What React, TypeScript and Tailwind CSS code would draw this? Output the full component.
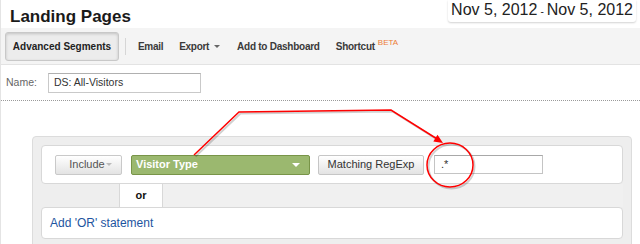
import React from "react";

function Caret({ className }: { className: string }) {
  return (
    <svg width="8" height="4" viewBox="0 0 8 4" className={className}>
      <path d="M0 0 L8 0 L4 4 Z" fill="currentColor" />
    </svg>
  );
}

function Annotation() {
  return (
    <svg
      width="640"
      height="244"
      viewBox="0 0 640 244"
      className="absolute left-0 top-0 pointer-events-none"
    >
      {/* soft shadow */}
      <g stroke="rgba(0,0,0,0.18)" strokeWidth="2" fill="none" transform="translate(1.5 1.5)">
        <polyline points="193,155 238,112 390,110 437,139.5" />
        <ellipse cx="449" cy="165" rx="23" ry="22" />
      </g>
      <g stroke="#ff0000" strokeWidth="1.5" fill="none">
        <polyline points="193,155 238,112 390,110 437,139.5" />
        <ellipse cx="449" cy="165" rx="23" ry="22" />
      </g>
      <polygon points="442,143 432.3,141.6 436.5,134.8" fill="#ff0000" />
    </svg>
  );
}

export default function App() {
  return (
    <div className="relative w-[640px] h-[244px] overflow-hidden bg-white border-l border-[#e4e4e4] font-['Liberation_Sans',Arial,sans-serif] text-[#222]">
      {/* Title + date range */}
      <div className="flex justify-between items-start h-[28px]">
        <h1 className="pl-[9px] pt-[7px] text-[17px] leading-[20px] font-bold text-[#1a1a1a]">
          Landing Pages
        </h1>
        <div className="mr-[4px] px-[3px] h-[22px] bg-white rounded-b-[3px] shadow-[0_1px_2px_rgba(0,0,0,0.18)] flex items-start">
          <span className="text-[16px] leading-[19px] text-[#222]">Nov 5, 2012</span>
          <span className="text-[10px] leading-[19px] px-[3px] pt-[2px] text-[#222]">-</span>
          <span className="text-[16px] leading-[19px] text-[#222]">Nov 5, 2012</span>
        </div>
      </div>

      {/* Toolbar */}
      <div className="flex items-center h-[37px] bg-[#f4f4f4] border-b border-[#e3e3e3] px-[4px] text-[10px] font-bold text-[#3a3a3a]">
        <div className="flex items-center justify-center w-[114px] h-[29px] rounded-[3px] border border-[#c8c8c8] bg-[#ececec] shadow-[inset_0_1px_3px_rgba(0,0,0,0.18)] text-[#222]">
          Advanced Segments
        </div>
        <div className="ml-[6px] w-px h-[17px] bg-[#d6d6d6]" />
        <span className="ml-[12px] tracking-[-0.3px]">Email</span>
        <span className="ml-[16px] flex items-center tracking-[-0.3px]">
          Export
          <Caret className="ml-[5px] text-[#666] w-[6px] h-[3px]" />
        </span>
        <span className="ml-[17px] tracking-[-0.25px]">Add to Dashboard</span>
        <span className="ml-[16px] flex items-start tracking-[-0.25px]">
          Shortcut
          <span className="ml-[3px] -mt-[2px] text-[8px] font-normal tracking-normal text-[#ec7c36]">BETA</span>
        </span>
      </div>

      {/* Name */}
      <div className="flex items-center mt-[8px] pl-[5px] h-[20px]">
        <span className="text-[10.5px] text-[#666]">Name:</span>
        <div className="ml-[11px] w-[153px] h-[20px] border border-[#c9c9c9] border-t-[#b0b0b0] flex items-center pl-[5px] text-[10.5px] text-[#333]">
          DS: All-Visitors
        </div>
      </div>
      <div className="mt-[7px] border-t border-dotted border-[#9a9a9a]" />

      {/* Segment definition */}
      <div className="mt-[35px] ml-[31px] mr-[8px] h-[120px] bg-[#eeeeee] border border-[#dcdcdc] rounded-[4px] p-[8px]">
        <div className="h-[39px] bg-white border border-[#d8d8d8] rounded-[4px] flex items-center pl-[13px]">
          <div className="flex items-center justify-center w-[67px] h-[20px] border border-[#c9c9c9] rounded-[2px] bg-gradient-to-b from-white to-[#e3e3e3] text-[11px] text-[#555] pl-[4px]">
            Include
            <Caret className="ml-[1px] text-[#bbb] w-[6px] h-[3px]" />
          </div>
          <div className="ml-[9px] w-[179px] h-[20px] border border-[#789448] rounded-[2px] bg-[#9bb86f] flex items-center justify-between pl-[4px] pr-[9px] text-[11px] font-bold text-white">
            Visitor Type
            <Caret className="text-white" />
          </div>
          <div className="ml-[8px] w-[106px] h-[20px] border border-[#c6c6c6] rounded-[2px] bg-gradient-to-b from-white to-[#e3e3e3] flex items-center justify-center text-[11px] text-[#333]">
            Matching RegExp
          </div>
          <div className="ml-[10px] w-[109px] h-[19px] border border-[#c4c4c4] border-t-[#a8a8a8] bg-white flex items-center pl-[6px] text-[11px] text-[#333]">
            .*
          </div>
        </div>
        <div className="flex h-[23px]">
          <div className="w-[78px]" />
          <div className="w-[44px] bg-white border-x border-[#d8d8d8] flex items-center justify-center text-[11px] font-bold text-[#111]">
            or
          </div>
          <div className="flex-1 bg-[#f0f0f0]" />
        </div>
        <div className="h-[32px] bg-white border border-[#d8d8d8] rounded-[4px] flex items-center pl-[8px] text-[12px] text-[#1d55a0]">
          Add &apos;OR&apos; statement
        </div>
      </div>

      <Annotation />
    </div>
  );
}
